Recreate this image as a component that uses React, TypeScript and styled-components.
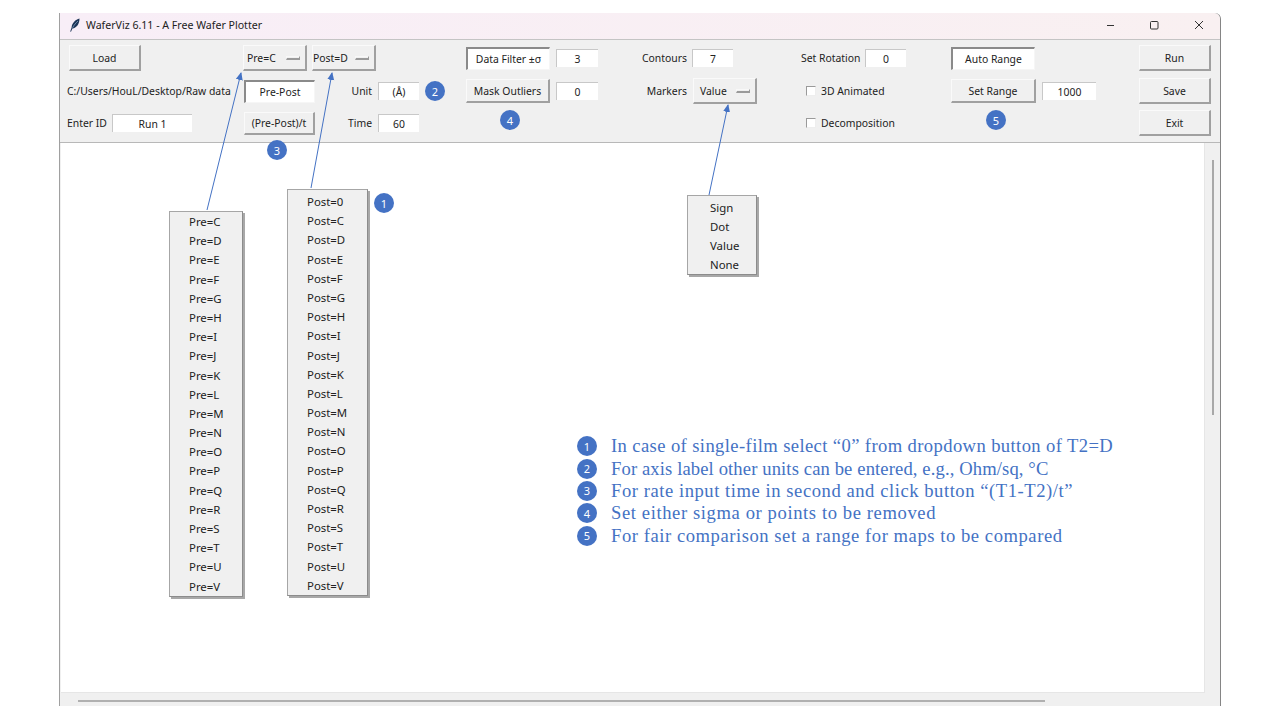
import React from 'react';
import styled, { createGlobalStyle } from 'styled-components';

const UI_FONT = '"Noto Sans", "Open Sans", "Liberation Sans", sans-serif';
const BLUE = '#4472c4';

const preItems = 'CDEFGHIJKLMNOPQRSTUV'.split('').map((c) => `Pre=${c}`);
const postItems = ['Post=0', ...'CDEFGHIJKLMNOPQRSTUV'.split('').map((c) => `Post=${c}`)];
const markerItems = ['Sign', 'Dot', 'Value', 'None'];

const notes: { text: string; spacing: number }[] = [
  { text: 'In case of single-film select “0” from dropdown button of T2=D', spacing: 0.39 },
  { text: 'For axis label other units can be entered, e.g., Ohm/sq, °C', spacing: 0.12 },
  { text: 'For rate input time in second and click button “(T1-T2)/t”', spacing: 0.55 },
  { text: 'Set either sigma or points to be removed', spacing: 0.6 },
  { text: 'For fair comparison set a range for maps to be compared', spacing: 0.55 },
];

const App = () => {
  return (
    <>
      <GlobalStyle />
      <Page>
        <Window>
          <TitleBar>
            <svg width="12" height="14" viewBox="0 0 12 14">
              <path d="M10.5 0.5C6.5 1.5 3 5 2.6 9.5L1.2 13.5L2 13.7L3.4 10.6C7.5 10 10.5 6 10.5 0.5Z" fill="#1d3557" />
              <path d="M9 3C7 4.8 5 7 3.6 9.8" stroke="#8fb0d0" strokeWidth="0.7" fill="none" />
            </svg>
            <TitleText>WaferViz 6.11 - A Free Wafer Plotter</TitleText>
            <WindowControls>
              <svg width="10" height="10" viewBox="0 0 10 10">
                <path d="M3 5.5H10" stroke="#333" strokeWidth="1" />
              </svg>
              <svg width="10" height="10" viewBox="0 0 10 10">
                <rect x="1.5" y="1.5" width="7.5" height="7.5" rx="1" fill="none" stroke="#333" strokeWidth="1" />
              </svg>
              <svg width="10" height="10" viewBox="0 0 10 10">
                <path d="M1 1L9 9M9 1L1 9" stroke="#333" strokeWidth="1" />
              </svg>
            </WindowControls>
          </TitleBar>

          <Toolbar>
            <Group $width={176} $left={7}>
              <Row>
                <Button $width={72} $left={2}>Load</Button>
              </Row>
              <Row>
                <Label>C:/Users/HouL/Desktop/Raw data</Label>
              </Row>
              <Row>
                <FixedLabel $width={45} $align="left">Enter ID</FixedLabel>
                <Entry $width={80}>Run 1</Entry>
              </Row>
            </Group>

            <Group $width={203}>
              <Row>
                <OptionMenu $width={64} $pad={3}>
                  <span>Pre=C</span>
                  <Indicator />
                </OptionMenu>
                <OptionMenu $width={64} $left={5} $pad={0}>
                  <span>Post=D</span>
                  <Indicator />
                </OptionMenu>
              </Row>
              <Row>
                <Toggle $width={71} $left={1}>Pre-Post</Toggle>
                <FixedLabel $width={57} $align="right">Unit</FixedLabel>
                <Entry $width={41} $left={6}>(Å)</Entry>
                <Badge $left={6}>2</Badge>
              </Row>
              <Row>
                <Button $width={71} $left={1} $height={23}>(Pre-Post)/t</Button>
                <FixedLabel $width={57} $align="right">Time</FixedLabel>
                <Entry $width={41} $left={6}>60</Entry>
              </Row>
            </Group>

            <Group $width={132} $left={20}>
              <Row>
                <Toggle $width={84}>Data Filter ±σ</Toggle>
                <Entry $width={42} $left={6}>3</Entry>
              </Row>
              <Row>
                <Button $width={84} $height={24}>Mask Outliers</Button>
                <Entry $width={42} $left={6}>0</Entry>
              </Row>
              <BadgeRow>
                <Badge $left={34}>4</Badge>
              </BadgeRow>
            </Group>

            <Group $width={116} $left={43}>
              <Row>
                <FixedLabel $width={46} $align="right">Contours</FixedLabel>
                <Entry $width={41} $left={5}>7</Entry>
              </Row>
              <Row>
                <FixedLabel $width={46} $align="right">Markers</FixedLabel>
                <OptionMenu $width={64} $left={6} $pad={6}>
                  <span>Value</span>
                  <Indicator />
                </OptionMenu>
              </Row>
            </Group>

            <Group $width={106} $left={44}>
              <Row>
                <FixedLabel $width={64} $align="left">Set Rotation</FixedLabel>
                <Entry $width={41}>0</Entry>
              </Row>
              <CheckRow>
                <CheckBox />
                <Label>3D Animated</Label>
              </CheckRow>
              <CheckRow>
                <CheckBox />
                <Label>Decomposition</Label>
              </CheckRow>
            </Group>

            <Group $width={145} $left={44}>
              <Row>
                <Toggle $width={84}>Auto Range</Toggle>
              </Row>
              <Row>
                <Button $width={85} $height={24}>Set Range</Button>
                <Entry $width={54} $left={6}>1000</Entry>
              </Row>
              <BadgeRow>
                <Badge $left={35}>5</Badge>
              </BadgeRow>
            </Group>

            <Group $width={72} $left={43}>
              <Row>
                <Button $width={72}>Run</Button>
              </Row>
              <Row>
                <Button $width={72}>Save</Button>
              </Row>
              <Row>
                <Button $width={72}>Exit</Button>
              </Row>
            </Group>
          </Toolbar>

          <Viewport>
            <Canvas />
            <VerticalTrack>
              <VerticalThumb />
            </VerticalTrack>
            <HorizontalTrack>
              <HorizontalThumb />
            </HorizontalTrack>
          </Viewport>

          <Menu $left={109} $top={198} $width={74} $pad={19} $lead={0} $tail={0}>
            {preItems.map((item) => (
              <MenuItem key={item}>{item}</MenuItem>
            ))}
          </Menu>
          <Menu $left={227} $top={176} $width={81} $pad={19} $lead={2} $tail={0}>
            {postItems.map((item) => (
              <MenuItem key={item}>{item}</MenuItem>
            ))}
          </Menu>
          <Menu $left={627} $top={182} $width={70} $pad={22} $lead={1.5} $tail={0}>
            {markerItems.map((item) => (
              <MenuItem key={item}>{item}</MenuItem>
            ))}
          </Menu>

          <FloatingBadge $left={314} $top={180}>1</FloatingBadge>
          <FloatingBadge $left={207} $top={127}>3</FloatingBadge>

          <Arrows width="1160" height="693" viewBox="0 0 1160 693">
            <defs>
              <marker id="head" markerWidth="9" markerHeight="9" refX="7" refY="3.5" orient="auto" markerUnits="userSpaceOnUse">
                <path d="M0 0L8 3.5L0 7Z" fill={BLUE} />
              </marker>
            </defs>
            <line x1="147" y1="197" x2="181" y2="60" stroke={BLUE} strokeWidth="1" markerEnd="url(#head)" />
            <line x1="251" y1="175" x2="272" y2="60" stroke={BLUE} strokeWidth="1" markerEnd="url(#head)" />
            <line x1="649" y1="182" x2="668" y2="92" stroke={BLUE} strokeWidth="1" markerEnd="url(#head)" />
          </Arrows>

          <Legend>
            {notes.map((note, i) => (
              <LegendRow key={note.text}>
                <LegendBadge>{i + 1}</LegendBadge>
                <LegendText $spacing={note.spacing}>{note.text}</LegendText>
              </LegendRow>
            ))}
          </Legend>
        </Window>
      </Page>
    </>
  );
};

const GlobalStyle = createGlobalStyle`
  html, body {
    margin: 0;
    padding: 0;
    background: #ffffff;
  }
`;

const Page = styled.div`
  width: 1280px;
  height: 720px;
  box-sizing: border-box;
  padding: 13px 60px 0;
  overflow: hidden;
  font-family: ${UI_FONT};
  font-size: 10.4px;
  color: #222;
`;

const Window = styled.div`
  position: relative;
  width: 1160px;
  height: 693px;
  display: flex;
  flex-direction: column;
  background: #f0f0f0;
  border-radius: 0 6px 0 0;
  box-shadow: -1px 0 0 #a0a0a0, 1px 0 0 #858585;
`;

const TitleBar = styled.div`
  height: 27px;
  box-sizing: border-box;
  display: flex;
  align-items: center;
  padding: 0 0 3px 9px;
  background: linear-gradient(90deg, #f8eef7, #f9f0f1);
  border-radius: 0 6px 0 0;
  border-bottom: 1px solid #c4c4c4;
  flex: none;
`;

const TitleText = styled.span`
  margin-left: 5px;
  font-size: 10.6px;
  color: #222;
`;

const WindowControls = styled.div`
  margin-left: auto;
  display: flex;
  align-items: center;
  gap: 35px;
  padding-right: 16px;
`;

const Toolbar = styled.div`
  height: 103px;
  box-sizing: border-box;
  flex: none;
  display: flex;
  padding-top: 1px;
  border-bottom: 1px solid #b8b8b8;
`;

const Group = styled.div<{ $width: number; $left?: number }>`
  width: ${({ $width }) => $width}px;
  margin-left: ${({ $left }) => $left ?? 0}px;
  flex: none;
  display: grid;
  grid-template-rows: 34px 32px 32px;
`;

const Row = styled.div`
  display: flex;
  align-items: center;
  white-space: nowrap;
`;

const BadgeRow = styled(Row)`
  align-items: flex-start;
  padding-top: 3px;
`;

const CheckRow = styled(Row)`
  padding-left: 5px;
  gap: 5px;
`;

const Label = styled.span`
  white-space: nowrap;
`;

const FixedLabel = styled.span<{ $width: number; $align: string }>`
  width: ${({ $width }) => $width}px;
  text-align: ${({ $align }) => $align};
`;

const Button = styled.div<{ $width: number; $left?: number; $height?: number }>`
  width: ${({ $width }) => $width}px;
  height: ${({ $height }) => $height ?? 26}px;
  margin-left: ${({ $left }) => $left ?? 0}px;
  box-sizing: border-box;
  display: flex;
  align-items: center;
  justify-content: center;
  background: #f0f0f0;
  border-style: solid;
  border-width: 1px 2px 2px 1px;
  border-color: #fafafa #a0a0a0 #a0a0a0 #fafafa;
`;

const Toggle = styled.div<{ $width: number; $left?: number }>`
  width: ${({ $width }) => $width}px;
  height: 23px;
  margin-left: ${({ $left }) => $left ?? 0}px;
  box-sizing: border-box;
  display: flex;
  align-items: center;
  justify-content: center;
  background: #ffffff;
  border-style: solid;
  border-width: 2px 1px 1px 2px;
  border-color: #8a8a8a #f6f6f6 #f6f6f6 #8a8a8a;
`;

const OptionMenu = styled.div<{ $width: number; $left?: number; $pad: number }>`
  width: ${({ $width }) => $width}px;
  height: 26px;
  margin-left: ${({ $left }) => $left ?? 0}px;
  box-sizing: border-box;
  display: flex;
  align-items: center;
  justify-content: space-between;
  padding: 0 5px 0 ${({ $pad }) => $pad}px;
  background: #f0f0f0;
  border-style: solid;
  border-width: 1px 2px 2px 1px;
  border-color: #fafafa #a0a0a0 #a0a0a0 #fafafa;
`;

const Indicator = styled.span`
  width: 14px;
  height: 4px;
  box-sizing: border-box;
  border-style: solid;
  border-width: 1px 1px 2px 1px;
  border-color: #f8f8f8 #9a9a9a #9a9a9a #f8f8f8;
`;

const Entry = styled.div<{ $width: number; $left?: number }>`
  width: ${({ $width }) => $width}px;
  height: 18px;
  margin-left: ${({ $left }) => $left ?? 0}px;
  box-sizing: border-box;
  display: flex;
  align-items: center;
  justify-content: center;
  background: #ffffff;
  border-style: solid;
  border-width: 1px 0 0 1px;
  border-color: #c8c8c8;
`;

const CheckBox = styled.span`
  width: 10px;
  height: 10px;
  box-sizing: border-box;
  background: #ffffff;
  border-style: solid;
  border-width: 1px;
  border-color: #9a9a9a #eeeeee #eeeeee #9a9a9a;
`;

const Badge = styled.span<{ $left?: number }>`
  width: 20px;
  height: 20px;
  margin-left: ${({ $left }) => $left ?? 0}px;
  flex: none;
  border-radius: 50%;
  display: flex;
  align-items: center;
  justify-content: center;
  background: ${BLUE};
  color: #ffffff;
  font-size: 11px;
`;

const FloatingBadge = styled(Badge)<{ $left: number; $top: number }>`
  position: absolute;
  margin: 0;
  left: ${({ $left }) => $left}px;
  top: ${({ $top }) => $top}px;
`;

const Viewport = styled.div`
  flex: 1;
  display: grid;
  grid-template-columns: 1fr 15px;
  grid-template-rows: 1fr 13px;
  padding-left: 1px;
`;

const Canvas = styled.div`
  background: #ffffff;
  border-right: 1px solid #e6e6e6;
  border-bottom: 1px solid #e6e6e6;
`;

const VerticalTrack = styled.div`
  padding: 17px 0 0 7px;
`;

const VerticalThumb = styled.div`
  width: 2px;
  height: 255px;
  background: #a8a8a8;
`;

const HorizontalTrack = styled.div`
  grid-column: 1 / span 2;
  padding: 7px 0 0 17px;
`;

const HorizontalThumb = styled.div`
  width: 967px;
  height: 2px;
  background: #b0b0b0;
`;

const Menu = styled.div<{ $left: number; $top: number; $width: number; $pad: number; $lead: number; $tail: number }>`
  position: absolute;
  left: ${({ $left }) => $left}px;
  top: ${({ $top }) => $top}px;
  width: ${({ $width }) => $width}px;
  box-sizing: border-box;
  padding: ${({ $lead }) => $lead}px 0 ${({ $tail }) => $tail}px ${({ $pad }) => $pad}px;
  font-size: 11.4px;
  background: #f0f0f0;
  border: 1px solid #a6a6a6;
  border-right-color: #8c8c8c;
  border-bottom-color: #8c8c8c;
  box-shadow: 2px 2px 0 #a8a8a8;
`;

const MenuItem = styled.div`
  height: 19.2px;
  line-height: 19.2px;
  white-space: nowrap;
`;

const Arrows = styled.svg`
  position: absolute;
  left: 0;
  top: 0;
  pointer-events: none;
`;

const Legend = styled.div`
  position: absolute;
  left: 517px;
  top: 422px;
  display: flex;
  flex-direction: column;
`;

const LegendRow = styled.div`
  height: 22.4px;
  display: flex;
  align-items: center;
`;

const LegendBadge = styled(Badge)`
  margin-right: 14px;
`;

const LegendText = styled.span<{ $spacing: number }>`
  font-family: "Liberation Serif", serif;
  font-size: 18.6px;
  letter-spacing: ${({ $spacing }) => $spacing}px;
  color: ${BLUE};
  white-space: nowrap;
`;

export default App;
